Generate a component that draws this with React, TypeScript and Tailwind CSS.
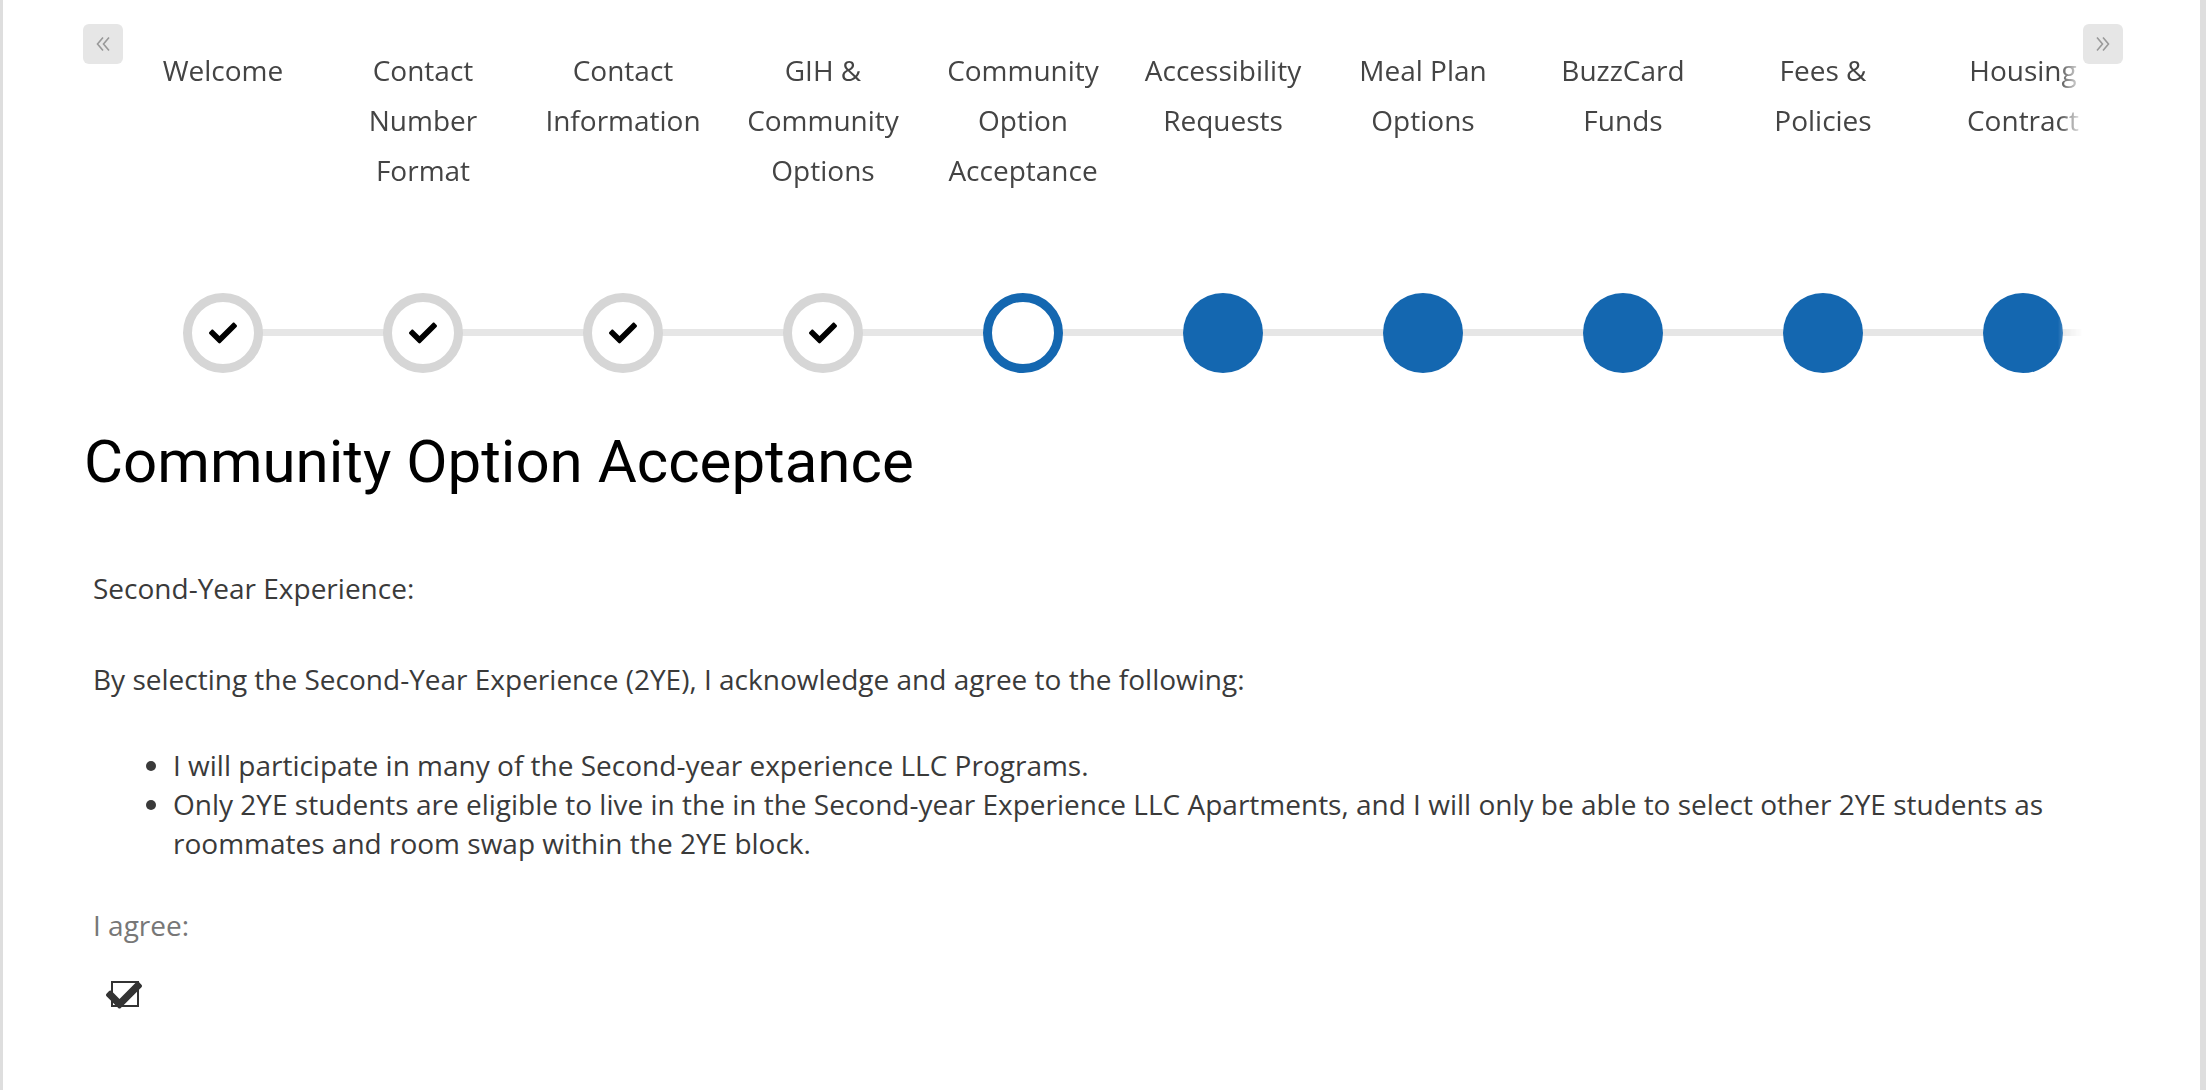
import { FaCheck } from 'react-icons/fa';

type Step = { lines: string[]; state: 'done' | 'active' | 'todo' };

const steps: Step[] = [
  { lines: ['Welcome'], state: 'done' },
  { lines: ['Contact', 'Number', 'Format'], state: 'done' },
  { lines: ['Contact', 'Information'], state: 'done' },
  { lines: ['GIH &', 'Community', 'Options'], state: 'done' },
  { lines: ['Community', 'Option', 'Acceptance'], state: 'active' },
  { lines: ['Accessibility', 'Requests'], state: 'todo' },
  { lines: ['Meal Plan', 'Options'], state: 'todo' },
  { lines: ['BuzzCard', 'Funds'], state: 'todo' },
  { lines: ['Fees &', 'Policies'], state: 'todo' },
  { lines: ['Housing', 'Contract'], state: 'todo' },
];

const dotClass = (state: Step['state']) => {
  if (state === 'done') return 'border-[9px] border-[#d6d6d6] bg-white';
  if (state === 'active') return 'border-[9px] border-[#1467b0] bg-white';
  return 'bg-[#1467b0]';
};

function StepDot({ state }: { state: Step['state'] }) {
  return (
    <div className={`relative z-10 w-[80px] h-[80px] rounded-full flex items-center justify-center ${dotClass(state)}`}>
      {state === 'done' && <FaCheck size={28} color="#000" />}
    </div>
  );
}

// thin double chevron, like the angle-double glyph
function DoubleChevron({ right = false }: { right?: boolean }) {
  return (
    <svg width="16" height="16" viewBox="0 0 16 16" fill="none" stroke="#999" strokeWidth="1.6"
      className={right ? 'rotate-180' : ''}>
      <polyline points="8,1.5 2.5,8 8,14.5" />
      <polyline points="14,1.5 8.5,8 14,14.5" />
    </svg>
  );
}

export default function App() {
  return (
    <div
      className="w-full h-[1090px] bg-white border-l-[3px] border-r-[6px] border-[#dedede] overflow-hidden"
      style={{ fontFamily: '"Open Sans", "Noto Sans", sans-serif' }}
    >
      {/* Stepper */}
      <div className="relative ml-[80px] mt-[24px] w-[2040px]">
        <button className="absolute left-0 top-0 w-10 h-10 rounded-md bg-[#e6e6e6] flex items-center justify-center">
          <DoubleChevron />
        </button>
        <button className="absolute right-0 top-0 z-20 w-10 h-10 rounded-md bg-[#e6e6e6] flex items-center justify-center">
          <DoubleChevron right />
        </button>

        <div className="ml-10 w-[1960px] overflow-hidden [mask-image:linear-gradient(to_right,black_1935px,transparent_1960px)]">
          <div className="w-[2000px]">
            <div className="flex pt-[21px]">
              {steps.map((s) => (
                <div key={s.lines.join(' ')} className="w-[200px] h-[150px] text-center text-[28px] leading-[50px] text-[#444]">
                  {s.lines.map((l) => (
                    <div key={l}>{l}</div>
                  ))}
                </div>
              ))}
            </div>

            <div className="relative flex mt-[98px]">
              <div className="absolute left-[100px] right-0 top-[36px] h-[7px] bg-[#e6e6e6]" />
              {steps.map((s) => (
                <div key={s.lines.join(' ')} className="w-[200px] flex justify-center">
                  <StepDot state={s.state} />
                </div>
              ))}
            </div>
          </div>
        </div>
      </div>

      {/* Content */}
      <div className="ml-[81px] mt-[54px]">
        <h1
          className="text-[60px] leading-[70px] text-black"
          style={{ fontFamily: 'Roboto, "Noto Sans", sans-serif' }}
        >
          Community Option Acceptance
        </h1>

        <div className="px-[9px] pt-[72px] text-[28px] leading-[39px] text-[#3a3a3a]">
          <p>Second-Year Experience:</p>
          <p className="mt-[52px]">
            By selecting the Second-Year Experience (2YE), I acknowledge and agree to the following:
          </p>
          <ul className="mt-[47px] list-disc pl-[80px] pr-[100px]">
            <li>I will participate in many of the Second-year experience LLC Programs.</li>
            <li>
              Only 2YE students are eligible to live in the in the Second-year Experience LLC Apartments, and I will only be
              able to select other 2YE students as roommates and room swap within the 2YE block.
            </li>
          </ul>

          <p className="mt-[43px] text-[#777]">I agree:</p>
          <div className="mt-[36px] ml-[18px] relative w-[28px] h-[26px] border-2 border-[#333]">
            <FaCheck size={36} color="#333" className="absolute -left-[7px] -top-[6px]" />
          </div>
        </div>
      </div>
    </div>
  );
}
